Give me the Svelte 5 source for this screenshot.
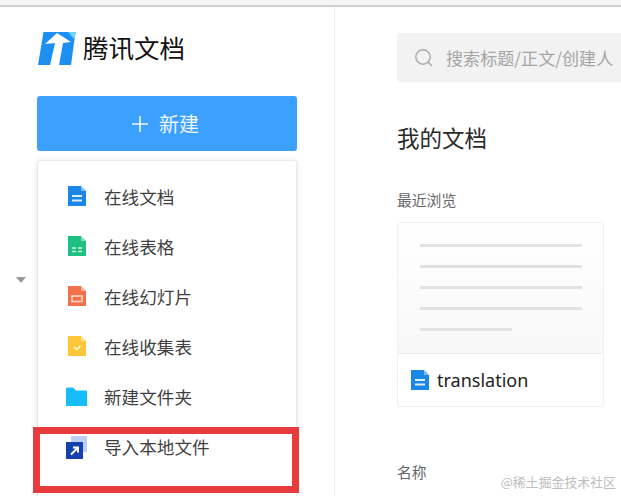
<script>
  // Entries of the "new" dropdown
  const menu = [
    { name: '在线文档', icon: 'doc' },
    { name: '在线表格', icon: 'sheet' },
    { name: '在线幻灯片', icon: 'slide' },
    { name: '在线收集表', icon: 'form' },
    { name: '新建文件夹', icon: 'folder' },
    { name: '导入本地文件', icon: 'import' }
  ];

  const colors = { doc: '#1a87e8', sheet: '#1fc083', slide: '#f2704a', form: '#fbc739' };
  const lines = [100, 100, 100, 100, 57];
</script>

{#snippet fileIcon(kind)}
  <svg class="file-icon" viewBox="0 0 18 20" width="18" height="20">
    {#if kind === 'folder'}
      <path d="M-2 3 Q-2 1.5 -0.5 1.5 H5 L8 4.5 H19 V20 H-2 Z" fill="#16bdf8" />
    {:else if kind === 'import'}
      <rect x="3" y="0" width="16" height="16" fill="#bcd0f7" />
      <rect x="-2" y="6" width="17" height="17" fill="#1642ad" />
      <path d="M3 18.5 L9.5 12 M5 11.5 H10 V16.5" stroke="#fff" stroke-width="2" fill="none" />
    {:else}
      <path d="M0 0 H13 L18 5 V20 H0 Z" fill={colors[kind]} />
      <path d="M13 0 L18 5 H13 Z" fill="#fff" opacity="0.45" />
      {#if kind === 'doc'}
        <path d="M4 10 H14 M4 14.5 H14" stroke="#fff" stroke-width="1.8" opacity="0.85" />
      {:else if kind === 'sheet'}
        <path d="M4 12 H8 M10 12 H14 M4 15.5 H8 M10 15.5 H14" stroke="#fff" stroke-width="1.6" opacity="0.8" />
      {:else if kind === 'slide'}
        <rect x="4" y="10" width="10" height="5.5" fill="none" stroke="#ffd9c8" stroke-width="1.6" />
      {:else}
        <path d="M6 11 L8.6 13.6 L12.5 9.8" fill="none" stroke="#fff" stroke-width="1.5" opacity="0.85" />
      {/if}
    {/if}
  </svg>
{/snippet}

<div class="page">
  <div class="topbar"></div>

  <div class="layout">
    <aside class="sidebar">
      <div class="brand">
        <svg class="logo" viewBox="0 0 38 33" width="38" height="33">
          <path d="M5.5 0 H37.5 L33 33 H0 Z" fill="#1d8ff2" />
          <path d="M30 0 H37.5 L36.5 7.5 Z" fill="#6fd0fb" />
          <path d="M19 1 L7 12 L17 11 L12 33 H21 L25 11 L33 10 Z" fill="#fff" />
        </svg>
        <span class="brand-name">腾讯文档</span>
      </div>

      <button class="new-btn">
        <svg viewBox="0 0 16 16" width="16" height="16">
          <path d="M0 8 H16 M8 0 V16" stroke="#eef7ff" stroke-width="1.6" />
        </svg>
        <span>新建</span>
      </button>

      <ul class="menu">
        {#each menu as item}
          <li>
            {@render fileIcon(item.icon)}
            <span>{item.name}</span>
          </li>
        {/each}
      </ul>

      <div class="caret"></div>
      <div class="highlight"></div>
    </aside>

    <main class="content">
      <div class="search">
        <svg viewBox="0 0 20 20" width="20" height="20">
          <circle cx="9" cy="9" r="7.2" fill="none" stroke="#a8a8a8" stroke-width="1.4" />
          <path d="M14 14 L18 18" stroke="#a8a8a8" stroke-width="1.4" />
        </svg>
        <span>搜索标题/正文/创建人</span>
      </div>

      <h1>我的文档</h1>
      <div class="label">最近浏览</div>

      <div class="card">
        <div class="preview">
          {#each lines as w}
            <div class="line" style="width: {w}%"></div>
          {/each}
        </div>
        <div class="card-foot">
          {@render fileIcon('doc')}
          <span>translation</span>
        </div>
      </div>

      <div class="label name">名称</div>
    </main>
  </div>

  <div class="watermark">@稀土掘金技术社区</div>
</div>

<style>
  :global(body) {
    margin: 0;
    background: #fff;
  }

  .page {
    position: relative;
    width: 621px;
    height: 496px;
    overflow: hidden;
    font-family: "Noto Sans CJK SC", "Liberation Sans", sans-serif;
    color: #333;
  }

  .topbar {
    height: 5px;
    background: #f5f5f5;
    border-bottom: 2px solid #d0d0d0;
  }

  .layout {
    display: flex;
    height: 489px;
  }

  .sidebar {
    position: relative;
    box-sizing: border-box;
    width: 335px;
    flex-shrink: 0;
    padding: 25px 37px 0;
    border-right: 1px solid #efefef;
  }

  .brand {
    display: flex;
    align-items: center;
    gap: 7px;
    margin-left: 1px;
    height: 33px;
  }

  .brand-name {
    font-size: 25.5px;
    color: #111;
    line-height: 33px;
    padding-bottom: 4px;
  }

  .new-btn {
    display: flex;
    align-items: center;
    justify-content: center;
    gap: 11px;
    width: 260px;
    height: 55px;
    margin-top: 31px;
    border: 0;
    border-radius: 3px;
    background: #3ba0ff;
    color: #eef7ff;
    font-family: inherit;
    font-size: 20px;
    padding: 0 3px 0 0;
  }

  .menu {
    list-style: none;
    margin: 9px 0 0;
    padding: 10px 0 0;
    width: 260px;
    box-sizing: border-box;
    height: 360px;
    border: 1px solid #e9e9e9;
    border-radius: 3px;
    box-shadow: 0 1px 6px rgba(0, 0, 0, 0.1);
  }

  .menu li {
    display: flex;
    align-items: center;
    height: 50px;
    padding-left: 30px;
    font-size: 17.6px;
    color: #3f3f3f;
  }

  .menu li span {
    margin-left: 18px;
  }

  .file-icon {
    flex-shrink: 0;
    overflow: visible;
  }

  .caret {
    position: absolute;
    left: 16px;
    top: 270px;
    border-left: 5px solid transparent;
    border-right: 5px solid transparent;
    border-top: 6px solid #9a9a9a;
  }

  .highlight {
    position: absolute;
    left: 33px;
    top: 420px;
    width: 266px;
    height: 66px;
    box-sizing: border-box;
    border: 7px solid #e83b3d;
  }

  .content {
    flex: 1;
    min-width: 0;
    padding: 26px 0 0 62px;
  }

  .search {
    display: flex;
    align-items: center;
    gap: 12px;
    width: 260px;
    height: 49px;
    padding-left: 17px;
    box-sizing: border-box;
    background: #f2f2f2;
    border-radius: 3px;
    color: #a5a5a5;
    font-size: 17.1px;
    white-space: nowrap;
  }

  h1 {
    margin: 38px 0 0;
    font-size: 22.5px;
    font-weight: 400;
    line-height: 34px;
    color: #2a2a2a;
  }

  .label {
    font-size: 14.8px;
    line-height: 22px;
    color: #666;
  }

  h1 + .label {
    margin-top: 35px;
  }

  .label.name {
    margin-top: 54px;
  }

  .card {
    width: 207px;
    height: 185px;
    box-sizing: border-box;
    margin-top: 11px;
    border: 1px solid #f0f0f0;
    border-radius: 3px;
  }

  .preview {
    height: 131px;
    box-sizing: border-box;
    padding: 21px 21px 0 22px;
    border-bottom: 1px solid #ececec;
    background: linear-gradient(#fff, #f8f8f8);
  }

  .line {
    height: 3px;
    margin-bottom: 18px;
    background: #e2e2e2;
  }

  .card-foot {
    display: flex;
    align-items: center;
    gap: 8px;
    height: 51px;
    padding-left: 13px;
    font-family: "Noto Sans", "Liberation Sans", sans-serif;
    font-size: 18px;
    color: #222;
  }

  .watermark {
    position: absolute;
    right: 5px;
    bottom: 5px;
    font-size: 12.9px;
    color: #bdbdbd;
  }
</style>
